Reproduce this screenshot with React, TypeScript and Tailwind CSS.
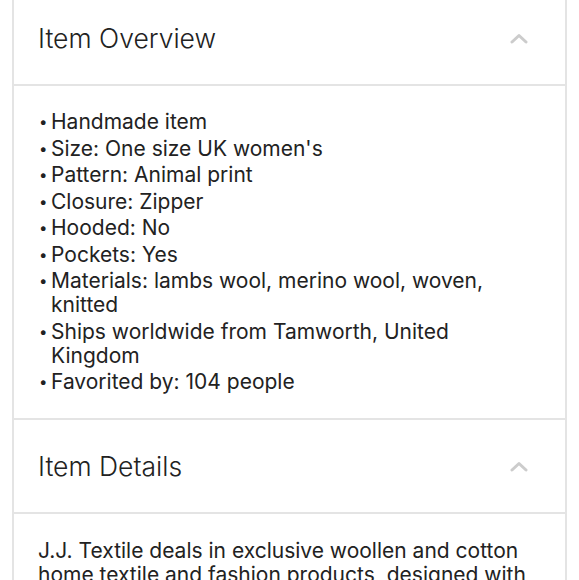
import React from 'react';

const overview = [
  'Handmade item',
  "Size: One size UK women's",
  'Pattern: Animal print',
  'Closure: Zipper',
  'Hooded: No',
  'Pockets: Yes',
  'Materials: lambs wool, merino wool, woven, knitted',
  'Ships worldwide from Tamworth, United Kingdom',
  'Favorited by: 104 people',
];

function Chevron() {
  return (
    <svg width="18" height="11" viewBox="0 0 18 11" fill="none" className="shrink-0">
      <polyline points="2,9 9,2.5 16,9" stroke="#cccccc" strokeWidth="3" strokeLinecap="round" strokeLinejoin="round" />
    </svg>
  );
}

function SectionHeader({ title }: { title: string }) {
  return (
    <div className="flex h-[92px] items-center justify-between pl-[24px] pr-[37px]">
      <h2 className="text-[26.5px] leading-none font-light text-[#222222]">{title}</h2>
      <Chevron />
    </div>
  );
}

export default function App() {
  return (
    <div className="min-h-screen bg-white px-3 font-['Inter',sans-serif]">
      <div className="-mt-[8px] border-x-2 border-[#e4e4e4] bg-white">
        <SectionHeader title="Item Overview" />
        <div className="border-y-2 border-[#e4e4e4] pl-[25px] pr-6 pt-[24px] pb-[24px]">
          <ul className="flex flex-col gap-[2.5px] text-[21px] leading-[24px] text-[#222222]">
            {overview.map((item) => (
              <li key={item} className="flex">
                <span className="w-[12px] shrink-0 text-[15px]">•</span>
                <span>{item}</span>
              </li>
            ))}
          </ul>
        </div>
        <SectionHeader title="Item Details" />
        <div className="border-t-2 border-[#e4e4e4] pl-[24px] pr-6 pt-[25px] pb-6">
          <p className="text-[21px] leading-[23.5px] text-[#222222]">
            J.J. Textile deals in exclusive woollen and cotton home textile and fashion products, designed with love and care in the United Kingdom.
          </p>
        </div>
      </div>
    </div>
  );
}
